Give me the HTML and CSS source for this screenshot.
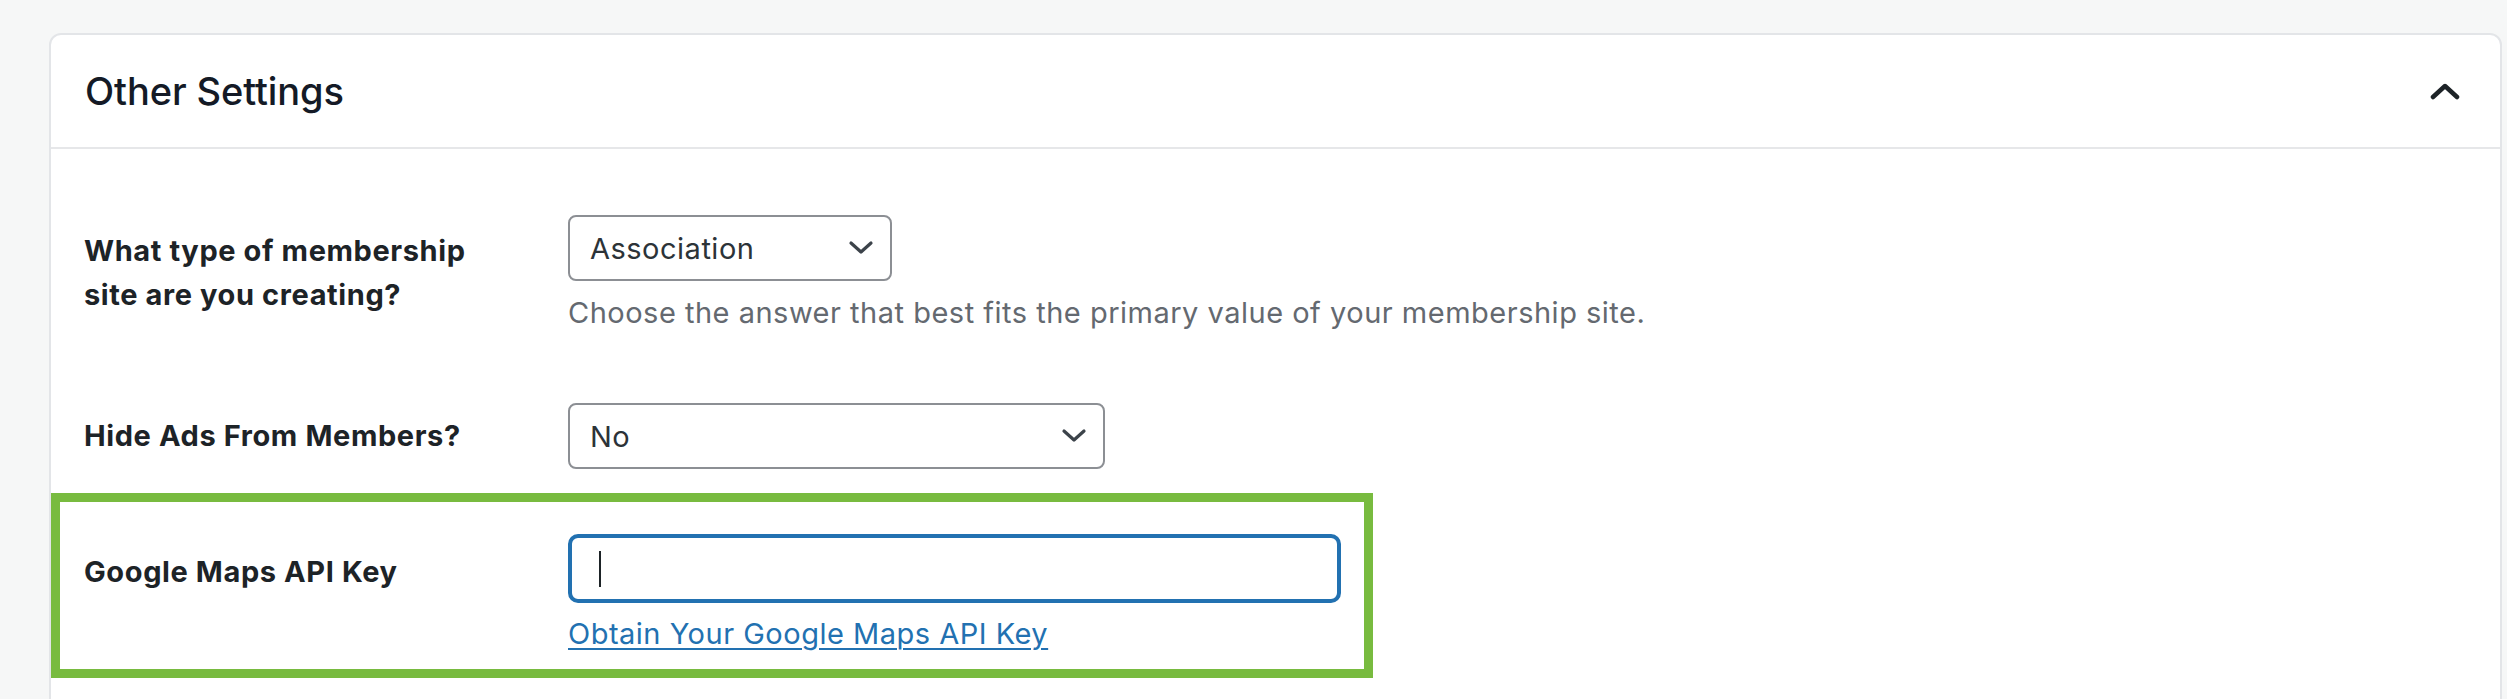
FILE: index.html
```html
<!DOCTYPE html>
<html lang="en">
<head>
    <meta charset="UTF-8">
    <meta name="viewport" content="width=device-width, initial-scale=1.0">
    <title>Other Settings</title>
    <link rel="stylesheet" href="styles.css">
</head>
<body>

    <div class="postbox">
        <div class="postbox-header">
            <h2 class="postbox-title">Other Settings</h2>
            <svg class="toggle-icon" width="30" height="18" viewBox="0 0 30 18">
                <path d="M3 15 L15 4 L27 15" fill="none" stroke="#1d2327" stroke-width="4.5" stroke-linecap="round" stroke-linejoin="round"/>
            </svg>
        </div>

        <div class="postbox-inside">
            <!-- Tipo de sitio -->
            <div class="setting-row first">
                <div class="setting-label">What type of membership site are you creating?</div>
                <div class="setting-field">
                    <div class="fake-select small">
                        <span>Association</span>
                        <svg width="26" height="16" viewBox="0 0 26 16">
                            <path d="M3 3 L13 12 L23 3" fill="none" stroke="#3c434a" stroke-width="3.2" stroke-linecap="round" stroke-linejoin="round"/>
                        </svg>
                    </div>
                    <p class="description">Choose the answer that best fits the primary value of your membership site.</p>
                </div>
            </div>

            <div class="setting-row">
                <div class="setting-label centered">Hide Ads From Members?</div>
                <div class="setting-field">
                    <div class="fake-select wide">
                        <span>No</span>
                        <svg width="26" height="16" viewBox="0 0 26 16">
                            <path d="M3 3 L13 12 L23 3" fill="none" stroke="#3c434a" stroke-width="3.2" stroke-linecap="round" stroke-linejoin="round"/>
                        </svg>
                    </div>
                </div>
            </div>

            <!-- Fila resaltada -->
            <div class="setting-row highlight">
                <div class="setting-label">Google Maps API Key</div>
                <div class="setting-field">
                    <div class="text-input"><span class="caret"></span></div>
                    <a class="field-link" href="#">Obtain Your Google Maps API Key</a>
                </div>
            </div>
        </div>
    </div>

</body>
</html>
```

FILE: styles.css
```css
html, body {
    margin: 0;
    height: 699px;
    overflow: hidden;
}

body {
    font-family: 'Inter', 'Noto Sans', sans-serif;
    background-color: #f6f7f7;
    padding: 33px 5px 0 49px;
    box-sizing: border-box;
    color: #1d2327;
}

.postbox {
    background-color: #fff;
    border: 2px solid #e3e5e8;
    border-radius: 12px;
    height: 760px;
    box-sizing: border-box;
}

.postbox-header {
    display: flex;
    align-items: center;
    justify-content: space-between;
    height: 112px;
    padding: 0 40px 0 34px;
    border-bottom: 2px solid #e6e7e9;
}

.postbox-title {
    margin: 0;
    font-size: 38px;
    font-weight: 500;
    color: #141a26;
    letter-spacing: -0.1px;
}

.toggle-icon {
    display: block;
}

.postbox-inside {
    padding-top: 66px;
}

.setting-row {
    display: grid;
    grid-template-columns: 484px 1fr;
    padding-left: 33px;
    margin-top: 69px;
}

.setting-row.first {
    margin-top: 0;
}

.setting-label {
    max-width: 400px;
    font-size: 29px;
    font-weight: 700;
    line-height: 44px;
    letter-spacing: 0.6px;
    padding-top: 14px;
    color: #1d2327;
}

.setting-label.centered {
    padding-top: 11px;
}

.fake-select {
    display: flex;
    align-items: center;
    justify-content: space-between;
    height: 66px;
    padding: 0 16px 0 20px;
    border: 2px solid #8c8f94;
    border-radius: 8px;
    box-sizing: border-box;
    font-size: 29px;
    letter-spacing: 0.5px;
    color: #2c3338;
}

.fake-select.small {
    width: 324px;
}

.fake-select.wide {
    width: 537px;
}

.description {
    margin: 11px 0 0;
    font-size: 29px;
    line-height: 42px;
    letter-spacing: 0.5px;
    color: #646970;
}

/* Marco verde alrededor de la clave de Google Maps */
.setting-row.highlight {
    width: 1322px;
    box-sizing: border-box;
    margin-top: 24px;
    border: 9px solid #78bb3f;
    padding: 32px 23px 14px 24px;
}

.setting-row.highlight .setting-label {
    padding-top: 16px;
}

.text-input {
    display: flex;
    align-items: center;
    height: 69px;
    padding-left: 27px;
    border: 4px solid #2271b1;
    border-radius: 10px;
    box-sizing: border-box;
}

.caret {
    width: 2px;
    height: 36px;
    background-color: #1d2327;
}

.field-link {
    display: block;
    margin-top: 10px;
    font-size: 29px;
    line-height: 42px;
    letter-spacing: 0.5px;
    color: #2271b1;
    text-decoration: underline;
    text-underline-offset: 4px;
    text-decoration-thickness: 2px;
}
```
